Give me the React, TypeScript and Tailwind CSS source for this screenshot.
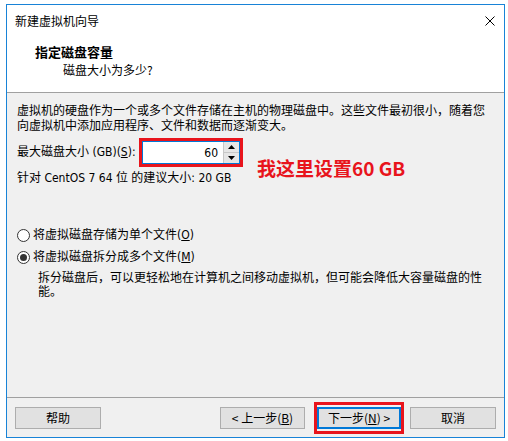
import React from 'react';

const font = "font-['DejaVu_Sans_Condensed','Noto_Sans_CJK_SC',sans-serif]";
const cjk = "font-['Noto_Sans_CJK_SC','Noto_Sans',sans-serif]";

function WinButton({
  children,
  width,
  primary = false,
}: {
  children: React.ReactNode;
  width: string;
  primary?: boolean;
}) {
  return (
    <div
      className={`${width} h-[22px] flex items-center justify-center bg-[#e1e1e1] text-[12px] leading-none text-black ${
        primary ? 'border-2 border-[#0078d7]' : 'border border-[#adadad]'
      }`}
    >
      {children}
    </div>
  );
}

function Radio({ checked }: { checked?: boolean }) {
  return (
    <span className="w-[13px] h-[13px] rounded-full border border-[#333] bg-white flex items-center justify-center shrink-0">
      {checked && <span className="w-[7px] h-[7px] rounded-full bg-[#333]" />}
    </span>
  );
}

export default function App() {
  return (
    <div className={`w-[508px] h-[441px] bg-white pt-[4px] pl-[6px] ${cjk} text-black`}>
      <div className="w-[499px] h-[434px] border border-[#1883d7] flex flex-col bg-[#f0f0f0]">
        {/* title bar */}
        <div className="h-[32px] bg-white flex items-center justify-between pl-[8px] pr-[9px]">
          <span className="text-[12px] leading-none">新建虚拟机向导</span>
          <svg width="10" height="10" viewBox="0 0 10 10">
            <path d="M0.5 0.5 L9.5 9.5 M9.5 0.5 L0.5 9.5" stroke="#000" strokeWidth="1" />
          </svg>
        </div>

        {/* heading */}
        <div className="h-[56px] bg-white border-b border-[#a0a0a0] pl-[28px] pt-[6px]">
          <div className="text-[13px] font-bold leading-[18px]">指定磁盘容量</div>
          <div className="text-[12px] leading-[16px] mt-[1px] ml-[28px]">磁盘大小为多少?</div>
        </div>

        {/* body */}
        <div className={`relative flex-1 pl-[10px] pt-[11px] text-[12px] ${font}`}>
          <p className="leading-[15px]">
            虚拟机的硬盘作为一个或多个文件存储在主机的物理磁盘中。这些文件最初很小，随着您
            <br />
            向虚拟机中添加应用程序、文件和数据而逐渐变大。
          </p>

          <div className="flex items-center mt-[4px]">
            <span className="w-[122px] leading-[15px] whitespace-nowrap">
              最大磁盘大小 (GB)(<u>S</u>):
            </span>
            <div className="w-[104px] h-[29px] border-[3px] border-[#e8141c]">
              <div className="h-[23px] border border-[#0078d7] bg-white flex">
                <div className="flex-1 flex items-center justify-end pr-[5px] leading-none">60</div>
                <div className="w-[16px] flex flex-col border-l border-[#c8c8c8]">
                  <div className="flex-1 bg-[#e6e6e6] border-b border-[#c8c8c8] flex items-center justify-center">
                    <svg width="7" height="4" viewBox="0 0 7 4">
                      <path d="M3.5 0 L7 4 L0 4 Z" fill="#000" />
                    </svg>
                  </div>
                  <div className="flex-1 bg-[#e6e6e6] flex items-center justify-center">
                    <svg width="7" height="4" viewBox="0 0 7 4">
                      <path d="M0 0 L7 0 L3.5 4 Z" fill="#000" />
                    </svg>
                  </div>
                </div>
              </div>
            </div>
          </div>

          <span
            className={`absolute left-[250px] top-[64px] text-[19px] font-bold leading-[21px] text-[#e8141c] whitespace-nowrap ${cjk}`}
          >
            我这里设置60 GB
          </span>

          <p className="leading-[15px] mt-[4px]">针对 CentOS 7 64 位 的建议大小: 20 GB</p>

          <div className="flex items-center gap-[3px] mt-[41px] leading-[16px]">
            <Radio />
            <span>
              将虚拟磁盘存储为单个文件(<u>O</u>)
            </span>
          </div>
          <div className="flex items-center gap-[3px] mt-[6px] leading-[16px]">
            <Radio checked />
            <span>
              将虚拟磁盘拆分成多个文件(<u>M</u>)
            </span>
          </div>
          <p className="leading-[14px] mt-[6px] ml-[21px]">
            拆分磁盘后，可以更轻松地在计算机之间移动虚拟机，但可能会降低大容量磁盘的性
            <br />
            能。
          </p>
        </div>

        {/* footer */}
        <div className="h-[40px] border-t border-[#a0a0a0] flex items-center pl-[8px] pr-[8px]">
          <WinButton width="w-[86px]">帮助</WinButton>
          <div className="flex-1" />
          <WinButton width="w-[85px]">
            &lt; 上一步(<u>B</u>)
          </WinButton>
          <div className="ml-[9px] w-[90px] h-[32px] border-[3px] border-[#e8141c] flex items-center">
            <WinButton width="w-full" primary>
              下一步(<u>N</u>) &gt;
            </WinButton>
          </div>
          <div className="ml-[6px]">
            <WinButton width="w-[86px]">取消</WinButton>
          </div>
        </div>
      </div>
    </div>
  );
}
